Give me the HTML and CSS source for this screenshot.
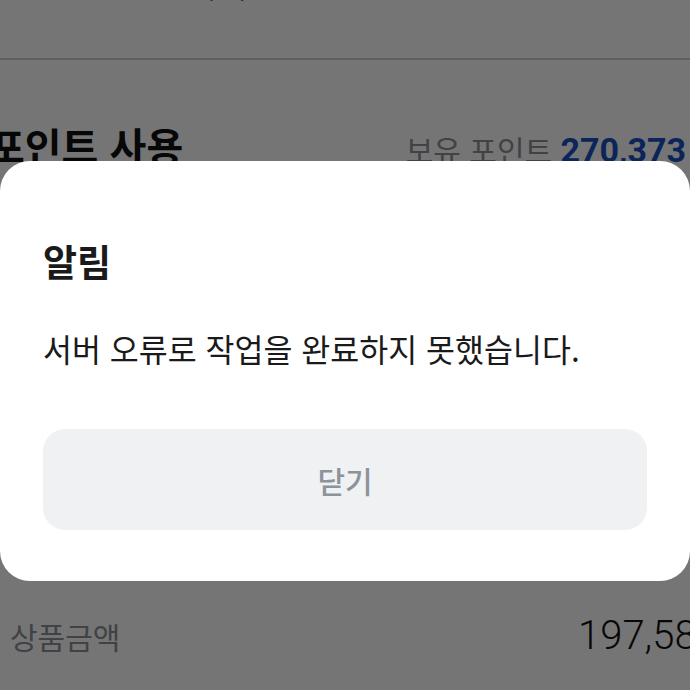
FILE: index.html
```html
<!DOCTYPE html>
<html lang="ko">
<head>
    <meta charset="UTF-8">
    <meta name="viewport" content="width=device-width, initial-scale=1.0">
    <title>주문서</title>
    <link rel="stylesheet" href="styles.css">
</head>
<body>
    <div class="page">
        <div class="page-head">
            <h1>주문상품 (1)</h1>
        </div>
        <div class="divider"></div>

        <section class="points">
            <div class="points-row">
                <h2>포인트 사용</h2>
                <div class="points-own">보유 포인트 <strong>270,373</strong></div>
            </div>
            <div class="points-input">
                <span>0</span>
                <button type="button">전액사용</button>
            </div>
        </section>

        <section class="summary">
            <div class="summary-row">
                <span class="label">상품금액</span>
                <span class="amount">197,580원</span>
            </div>
        </section>
    </div>

    <!-- 알림 팝업 -->
    <div class="dim"></div>
    <div class="dialog" role="dialog">
        <h3 class="dialog-title">알림</h3>
        <p class="dialog-text">서버 오류로 작업을 완료하지 못했습니다.</p>
        <button type="button" class="dialog-close">닫기</button>
    </div>
</body>
</html>
```

FILE: styles.css
```css
html, body {
    margin: 0;
    padding: 0;
}
body {
    width: 690px;
    height: 690px;
    overflow: hidden;
    background: #fff;
    font-family: "Noto Sans CJK KR", "Noto Sans", sans-serif;
    color: #111;
}
.page {
    width: 690px;
}
.page-head {
    height: 58px;
    margin-top: -42px;
    padding-left: 60px;
}
.page-head h1 {
    margin: 0;
    font-size: 36px;
    line-height: 44px;
    font-weight: 700;
}
.divider {
    height: 2px;
    margin-top: 42px;
    background: #cdd1d3;
}
.points {
    padding-top: 60px;
    height: 488px;
}
.points-row {
    display: flex;
    justify-content: space-between;
    align-items: baseline;
    margin-left: -12px;
    padding-right: 4px;
}
.points-row h2 {
    margin: 0;
    font-size: 40px;
    line-height: 50px;
    font-weight: 700;
}
.points-own {
    font-size: 30px;
    color: #8b9096;
}
.points-own strong {
    font-family: Roboto, "Liberation Sans", sans-serif;
    font-weight: 700;
    font-size: 34px;
    color: #1a4fc4;
}
.points-input {
    display: flex;
    gap: 12px;
    margin-top: 24px;
}
.points-input span {
    flex: 1;
    height: 90px;
    border: 2px solid #ddd;
    border-radius: 16px;
}
.points-input button {
    width: 180px;
    border: 0;
    border-radius: 16px;
    background: #eee;
}
.summary-row {
    display: grid;
    grid-template-columns: 568px auto;
    padding-left: 10px;
    align-items: center;
    white-space: nowrap;
}
.summary-row .label {
    font-size: 30px;
    color: #8b9096;
}
.summary-row .amount {
    font-family: Roboto, "Liberation Sans", sans-serif;
    font-weight: 300;
    font-size: 40px;
    color: #111;
}

/* 알림 팝업 */
.dim {
    position: fixed;
    inset: 0;
    background: rgba(0, 0, 0, 0.54);
}
.dialog {
    position: fixed;
    left: 0;
    right: 0;
    top: 161px;
    height: 420px;
    box-sizing: border-box;
    padding: 0 43px;
    background: #fff;
    border-radius: 30px;
}
.dialog-title {
    margin: 77px 0 0;
    font-size: 37px;
    line-height: 46px;
    font-weight: 700;
    color: #1a1a1a;
}
.dialog-text {
    margin: 43px 0 0;
    font-size: 31.5px;
    line-height: 42px;
    color: #1a1a1a;
}
.dialog-close {
    display: block;
    width: 100%;
    height: 101px;
    margin-top: 60px;
    border: 0;
    border-radius: 22px;
    background: #f0f1f3;
    font-family: inherit;
    font-size: 30px;
    font-weight: 500;
    color: #8b939b;
}
```
